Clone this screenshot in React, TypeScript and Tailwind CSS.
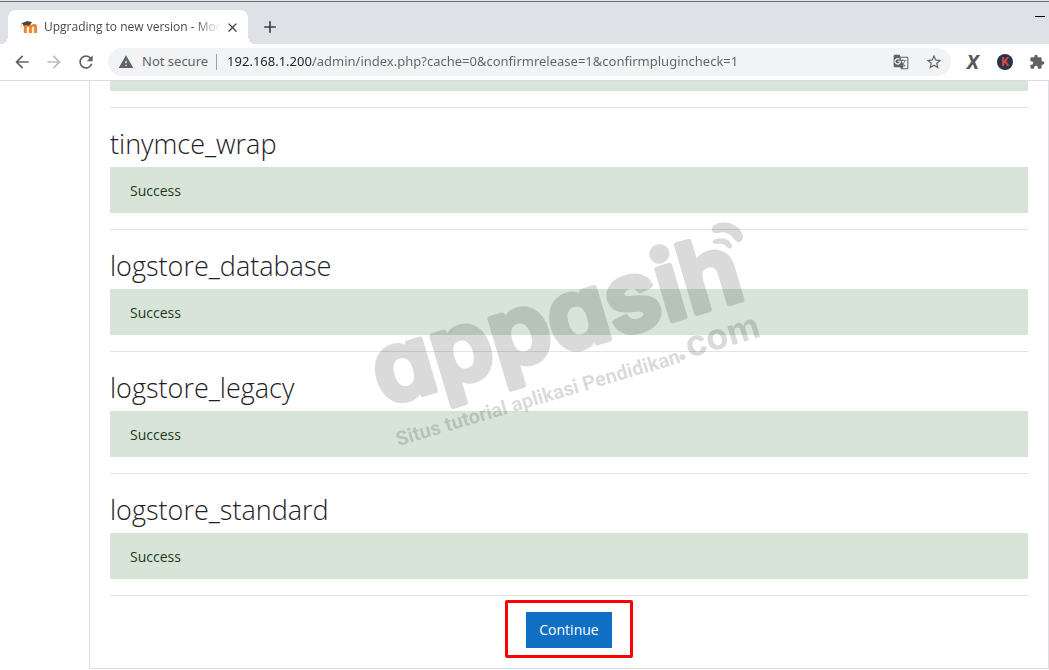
import { MdAdd, MdArrowBack, MdArrowForward, MdClose, MdExtension, MdGTranslate, MdRefresh, MdStarBorder, MdWarning } from "react-icons/md";

const plugins = ["tinymce_wrap", "logstore_database", "logstore_legacy", "logstore_standard"];

function MoodleIcon() {
  return (
    <svg viewBox="0 0 16 16" className="h-4 w-4 shrink-0 overflow-visible" aria-hidden="true">
      <text x="3" y="14" fontSize="15" fontWeight="800" fill="#f08223" className="font-['Open_Sans',sans-serif]">
        m
      </text>
      <path d="M1 4.6 7.2 2l5 1.2-3.4 3.6C6.6 5.7 4.8 6 3.4 7.2l-.3-2z" fill="#4a4643" />
      <path d="M1.4 5 1 9.5" stroke="#c9b9a8" strokeWidth="0.8" />
    </svg>
  );
}

function TabBar() {
  return (
    <div className="flex h-11 items-end border-t border-[#e4e7ea] bg-[#dee1e6] pl-2 shadow-[inset_0_1px_0_#666c6a]">
      <div className="relative flex h-[34px] w-60 shrink-0 items-center rounded-t-lg bg-white pr-2 pl-3">
        <span className="absolute bottom-0 -left-2 h-2 w-2 bg-[radial-gradient(circle_at_0_0,#dee1e6_8px,#fff_8px)]" />
        <span className="absolute -right-2 bottom-0 h-2 w-2 bg-[radial-gradient(circle_at_100%_0,#dee1e6_8px,#fff_8px)]" />
        <MoodleIcon />
        <span className="ml-2 flex-1 overflow-hidden text-xs whitespace-nowrap text-[#45494d] [mask-image:linear-gradient(to_right,#000_84%,transparent_98%)]">
          Upgrading to new version - Moo
        </span>
        <button type="button" aria-label="Close tab" className="flex h-4 w-4 shrink-0 items-center justify-center text-[#3c4043]">
          <MdClose size={15} />
        </button>
      </div>
      <button type="button" aria-label="New tab" className="ml-3 flex h-[34px] w-5 items-center justify-center text-[#3c4043]">
        <MdAdd size={20} />
      </button>
      <button type="button" aria-label="Minimize" className="mr-1 mb-[27px] ml-auto h-px w-[10px] bg-black" />
    </div>
  );
}

function Toolbar() {
  return (
    <div className="flex h-[37px] items-center border-b border-[#dadce0] bg-white pr-1 pl-3">
      <div className="flex shrink-0 gap-3 text-[#5f6368]">
        <button type="button" aria-label="Back">
          <MdArrowBack size={20} />
        </button>
        <button type="button" aria-label="Forward" className="text-[#babcbe]">
          <MdArrowForward size={20} />
        </button>
        <button type="button" aria-label="Reload">
          <MdRefresh size={20} />
        </button>
      </div>
      <div className="ml-3 flex h-7 min-w-0 flex-1 items-center rounded-full bg-[#f1f3f4] pr-2 pl-[10px] font-['Segoe_UI','Noto_Sans',sans-serif] text-[13px] text-[#5f6368]">
        <button type="button" className="flex shrink-0 items-center gap-2">
          <MdWarning size={16} />
          Not secure
        </button>
        <span className="mr-[10px] ml-2 h-4 w-px shrink-0 bg-[#9aa0a6]" />
        <input
          type="text"
          aria-label="Address"
          readOnly
          value="192.168.1.200/admin/index.php?cache=0&confirmrelease=1&confirmplugincheck=1"
          className="min-w-0 flex-1 bg-[linear-gradient(to_right,#202124_86px,#5f6368_86px)] bg-clip-text text-transparent outline-none"
        />
        <button type="button" aria-label="Translate this page">
          <MdGTranslate size={16} />
        </button>
        <button type="button" aria-label="Bookmark this tab" className="ml-4">
          <MdStarBorder size={18} />
        </button>
      </div>
      <div className="ml-[14px] flex shrink-0 items-center gap-4 text-[#5f6368]">
        <button type="button" className="w-4 text-center font-[Roboto,sans-serif] text-xl leading-5 font-bold text-[#55585b] italic">
          X
        </button>
        <button type="button" className="h-4 w-4 rounded-full bg-[#263645] text-center font-[Roboto,sans-serif] text-xs leading-4 font-bold text-[#e2474b]">
          K
        </button>
        <button type="button" aria-label="Extensions">
          <MdExtension size={16} />
        </button>
      </div>
    </div>
  );
}

function Watermark() {
  return (
    <svg
      viewBox="0 0 400 240"
      className="pointer-events-none absolute top-[138px] left-1/2 h-60 w-[400px] -translate-x-1/2 overflow-visible"
      fill="#000"
      opacity="0.14"
    >
      <g transform="translate(17 186) rotate(-16.5)">
        <text
          x="-3"
          y="0"
          fontSize="97"
          fontWeight="600"
          stroke="#000"
          strokeWidth="6"
          strokeLinejoin="round"
          className="font-[Inter,sans-serif] [font-feature-settings:'cv11']"
        >
          appasih
        </text>
        <text x="0" y="43" fontSize="20" fontWeight="700" className="font-[Roboto,sans-serif]">
          Situs tutorial aplikasi Pendidikan
        </text>
        <text x="292" y="41" fontSize="36" fontWeight="700" className="font-[Inter,sans-serif]">
          .com
        </text>
      </g>
      <path d="M344 7C353 0 371 4 374 17c0 7-6 8-9 3-4-6-10-8-16-6-5 1-8-3-5-7Z" />
      <path d="M345 21c7-4 17-1 18 6 0 4-4 3-6 0-3-3-6-2-9-2-4 0-6-2-3-4Z" />
    </svg>
  );
}

export default function App() {
  return (
    <div className="min-h-screen overflow-hidden bg-white font-['Segoe_UI','Open_Sans',sans-serif]">
      <header>
        <TabBar />
        <Toolbar />
      </header>
      <main className="relative ml-[89px] border-x border-b border-[#dedfe2] px-5 pb-[10px]">
        <div className="h-[10px] bg-[#d8e4d7]" />
        {plugins.map((name) => (
          <section key={name} className="mt-4 border-t border-[#e3e3e3] pt-[18px]">
            <h2 className="mb-[6px] text-[27px] leading-[35px] font-light text-[#1d2125]">{name}</h2>
            <div className="bg-[#d8e4d7] px-5 pt-[13px] pb-[11px] text-sm leading-[22px] text-[#183c17]">Success</div>
          </section>
        ))}
        <hr className="mt-4 border-[#e3e3e3]" />
        <div className="mt-1 flex justify-center">
          <div className="rounded-xs border-3 border-[#fe0000] px-[18px] pt-[9px] pb-[7px]">
            <button type="button" className="h-9 bg-[#0f6fc5] px-[13px] text-sm text-white">
              Continue
            </button>
          </div>
        </div>
        <Watermark />
      </main>
    </div>
  );
}
